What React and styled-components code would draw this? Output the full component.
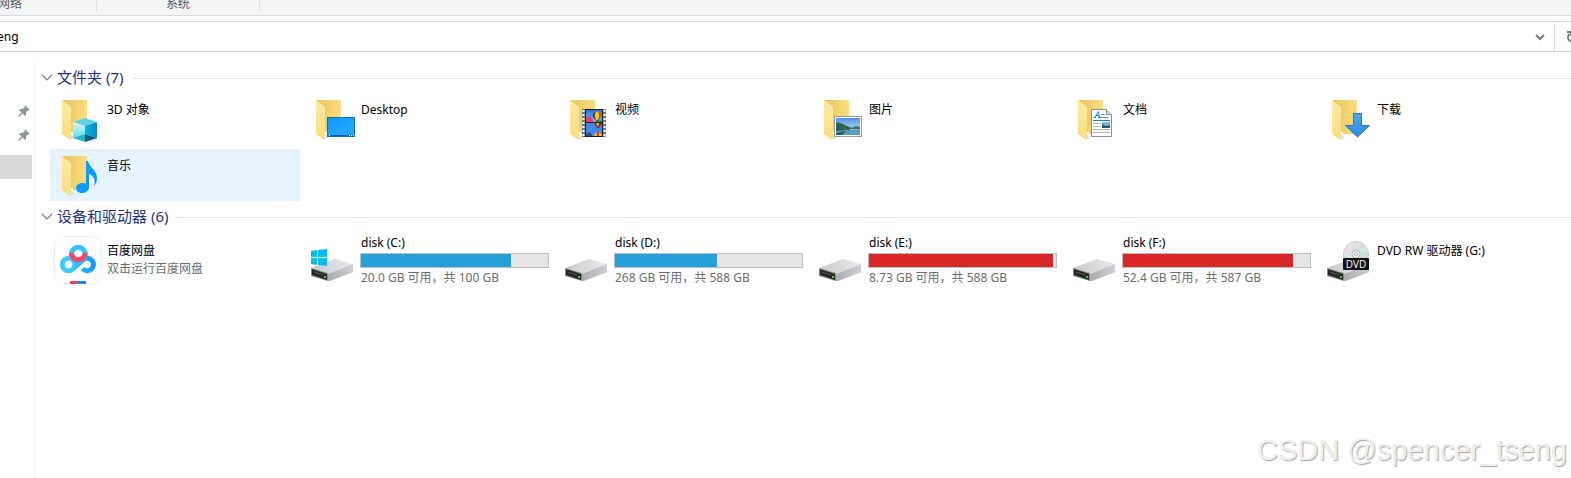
import React, { useState } from "react";
import styled, { createGlobalStyle } from "styled-components";

const folders = [
  { name: "3D 对象", kind: "cube" },
  { name: "Desktop", kind: "desktop" },
  { name: "视频", kind: "video" },
  { name: "图片", kind: "picture" },
  { name: "文档", kind: "document" },
  { name: "下载", kind: "download" },
  { name: "音乐", kind: "music", hovered: true },
];

const drives = [
  { name: "百度网盘", kind: "netdisk", note: "双击运行百度网盘" },
  { name: "disk (C:)", kind: "system", free: "20.0", total: 100 },
  { name: "disk (D:)", kind: "drive", free: "268", total: 588 },
  { name: "disk (E:)", kind: "drive", free: "8.73", total: 588 },
  { name: "disk (F:)", kind: "drive", free: "52.4", total: 587 },
  { name: "DVD RW 驱动器 (G:)", kind: "dvd" },
];

// Icons start
const Cube = () => (
  <>
    <path d="M33 47 L46 44 L43 42z" fill="#e3e3e3" />
    <path d="M31 23 L43 27 L31 31 L19 27z" fill="#5fd2e2" />
    <path d="M19 27 L31 31 V39 L19 43z" fill="url(#cubeLeft)" />
    <path d="M43 27 L31 31 V39 L43 43z" fill="url(#cubeRight)" />
    <path d="M19 43 L31 39 V47z" fill="#27b3c3" />
    <path d="M43 43 L31 39 V47z" fill="#00617f" />
  </>
);

const Desktop = () => (
  <>
    <rect x="19.5" y="22.5" width="27" height="19" fill="url(#screen)" stroke="#0873b8" />
    <path d="M20 40.5 H46" stroke="#0b62a5" />
    <path d="M21 40.5 H22 M41 40.5 H42 M43 40.5 H44 M45 40.5 H46" stroke="#fff" />
  </>
);

const Balloon = ({ x, y, s = 1 }) => (
  <g transform={`translate(${x} ${y}) scale(${s})`}>
    <path d="M0 -5 C5 -5 6 0 2 4 H-2 C-6 0 -5 -5 0 -5z" fill="#f4c51b" />
    <path d="M-1 -5 C-3 -2 -3 1 -1 4 H-2 C-6 0 -5 -4 -1 -5z" fill="#2c3b33" />
    <path d="M1 -5 C3 -2 3 1 1 4 H2 C6 0 5 -4 1 -5z" fill="#c33b2c" />
    <rect x="-1" y="5" width="2" height="1" fill="#412" />
  </g>
);

const Video = () => (
  <>
    <rect x="20" y="14" width="24" height="28" fill="#767676" />
    <path
      d="M21.5 15 V42 M42.5 15 V42"
      stroke="#fff"
      strokeWidth="2"
      strokeDasharray="2 2"
    />
    <rect x="23" y="14" width="18" height="28" fill="#1b1b1f" />
    <rect x="24" y="15" width="16" height="12" fill="url(#sky)" />
    <rect x="24" y="28" width="16" height="13" fill="#4288e6" />
    <path d="M24 23 L28 21 L31 25 V27 H24z" fill="#e43e63" />
    <path d="M33 27 L37 24 L40 26 V27z" fill="#1ca15a" />
    <Balloon x={35} y={21} s={0.9} />
    <path d="M32 28 H40 L37 33 H35z" fill="#7d2a29" />
    <path d="M34 28 H37 L36 32z" fill="#f4c51b" />
    <path d="M24 41 C24 37 29 36 30 41z" fill="#354574" />
    <path d="M32 41 C32 36 40 36 40 41z" fill="#f0b927" />
    <path d="M35 37 H37 V41 H35z" fill="#c33b2c" />
  </>
);

const Picture = () => (
  <>
    <rect x="18.5" y="21.5" width="27" height="20" fill="#fff" stroke="#9b9b9b" />
    <rect x="20" y="23" width="24" height="17" fill="url(#photo)" />
    <path d="M20 28 C25 26 30 32 37 33 L33 35 L20 37z" fill="#2e6253" />
    <path d="M35 33 L40 31 L44 32 V34 H34z" fill="#44745f" />
    <path d="M20 36 L33 35 L44 34 V40 H20z" fill="#5b9bbd" />
    <path d="M20 38 L30 36 L26 40 H20z" fill="#235a5f" />
  </>
);

const DocumentPage = () => (
  <>
    <path d="M21.5 14.5 H36.5 L41.5 19.5 V41.5 H21.5z" fill="#fdfdfd" stroke="#8c8c8c" />
    <path d="M36.5 14.5 V19.5 H41.5" fill="#dedede" stroke="#8c8c8c" />
    <path
      d="M23.5 22.5 H26 M25 22 L28.5 16.5 L29.5 22.5 M26 20.5 H29 M28 22.5 H31"
      fill="none"
      stroke="#1685cf"
    />
    <path d="M31 19.5 H35 M31 22.5 H39" stroke="#54a8de" />
    <path d="M23 25.5 H40" stroke="#1685cf" />
    <path d="M23 28.5 H31 M23 31.5 H31 M23 34.5 H40 M23 37.5 H40" stroke="#b5b5b5" />
    <rect x="32" y="27" width="8" height="6" fill="#7eb6e8" />
    <path d="M32 29 L36 31 L40 30 V33 H32z" fill="#28605f" />
  </>
);

const Download = () => (
  <path
    d="M29.5 18.5 H37.5 V30.5 H45.5 L33.5 42 L21.5 30.5 H29.5z"
    fill="url(#arrow)"
    stroke="#2a76b8"
  />
);

const Music = () => (
  <path
    d="M32 10 H34 C35 16 43 19 43 27 C43 30 42 33 40 35 C42 28 39 24 35 23 V36 C35 40 31 42 28 42 C25 42 22 40 22 37 C22 34 25 32 29 32 C30 32 31 32 32 33z"
    fill="#0a9bf5"
  />
);

const overlays = {
  cube: Cube,
  desktop: Desktop,
  video: Video,
  picture: Picture,
  document: DocumentPage,
  download: Download,
  music: Music,
};

const Folder = ({ kind }) => {
  const Overlay = overlays[kind];
  return (
    <>
      <path d="M15 45 L21 43 L17 39z" fill="#e2e2e2" />
      <rect x="8" y="5" width="25" height="34" fill="url(#folderBack)" />
      <path d="M17 39 H19 V37 H17z" fill="#fff" />
      <path d="M8 5 L17 12 V40 L16 45 L8 39z" fill="url(#folderFront)" />
      <Overlay />
    </>
  );
};

const DriveBody = () => (
  <>
    <path d="M20 45 L46 36 L45 34z" fill="#dcdcdc" />
    <path d="M3 32 L27 23 L45 28 L20 38z" fill="url(#driveTop)" />
    <path d="M20 38 L45 28 V36 L22 45 H20z" fill="url(#driveSide)" />
    <path d="M3 32 L20 37 V45 L3 40z" fill="#8b8b8b" />
    <path d="M4 33 L19 38 V44 L4 39z" fill="#262626" />
    <path d="M6 36 L15 39" stroke="#5a5a5a" />
    <rect x="16" y="40" width="2" height="2" fill="#2fe02f" />
  </>
);

const WindowsLogo = () => (
  <path
    d="M3 15 L9 14 V21 H3z M10 14 L19 13 V21 H10z M3 22 H9 V29 L3 28z M10 22 H19 V30 L10 29z"
    fill="#00bcf2"
  />
);

const Dvd = () => (
  <>
    <DriveBody />
    <circle cx="32" cy="18" r="12.5" fill="url(#disc)" stroke="#c3cbc9" />
    <path d="M32 18 L20 14 L23 10z" fill="#efd9ee" />
    <path d="M32 18 L42 10 L44 15z" fill="#c9efdf" />
    <circle cx="32" cy="18" r="4" fill="#e8eceb" stroke="#b3bbb9" />
    <circle cx="32" cy="18" r="1.5" fill="#fff" stroke="#b3bbb9" />
    <rect x="19" y="22" width="26" height="12" rx="1" fill="#111" />
    <text x="32" y="32" textAnchor="middle" fontFamily="Open Sans, sans-serif" fontSize="10" fill="#fff">
      DVD
    </text>
  </>
);

const Netdisk = () => (
  <>
    <rect x="0.5" y="0.5" width="47" height="47" rx="9" fill="#fff" stroke="#ececec" />
    <g fill="none" strokeWidth="5">
      <circle cx="14.6" cy="28.5" r="6.2" stroke="#3ccbff" />
      <path d="M19 33 L29 24 A6.2 6.2 0 1 1 28.5 32.5" stroke="url(#cloud)" />
      <circle cx="24.3" cy="18" r="6.8" stroke="#2fc0ff" />
      <path d="M17.5 17 A6.8 6.8 0 0 0 31.1 17" stroke="#fb4767" />
    </g>
    <rect x="16" y="45" width="8" height="3" fill="#f5426a" />
    <rect x="24" y="45" width="8" height="3" fill="#1b84f5" />
  </>
);

const ItemIcon = ({ kind }) => (
  <IconBox viewBox="0 0 48 48" aria-hidden="true">
    {overlays[kind] && <Folder kind={kind} />}
    {(kind === "drive" || kind === "system") && <DriveBody />}
    {kind === "system" && <WindowsLogo />}
    {kind === "dvd" && <Dvd />}
    {kind === "netdisk" && <Netdisk />}
  </IconBox>
);

const gradients = [
  { id: "folderBack", from: "#e9c35c", to: "#fbdd80", x2: 1, y2: 0 },
  { id: "folderFront", from: "#ffeaa8", to: "#fbdc7f", x2: 0, y2: 1 },
  { id: "cubeLeft", from: "#e4f8f8", to: "#5edbe8", x2: 0, y2: 1 },
  { id: "cubeRight", from: "#00bcd4", to: "#0c86cf", x2: 1, y2: 0 },
  { id: "screen", from: "#0f97fa", to: "#2aabff", x2: 1, y2: 1 },
  { id: "sky", from: "#2f6fdc", to: "#7db4f5", x2: 0, y2: 1 },
  { id: "photo", from: "#4f92e8", to: "#e8f4fb", x2: 0, y2: 1 },
  { id: "arrow", from: "#4aa8f0", to: "#2b8ce0", x2: 0, y2: 1 },
  { id: "driveTop", from: "#c9cacc", to: "#e9eaec", x2: 1, y2: 0 },
  { id: "driveSide", from: "#a9abae", to: "#cfd0d4", x2: 1, y2: 0 },
  { id: "disc", from: "#e6eae9", to: "#cdd6d3", x2: 1, y2: 1 },
  { id: "cloud", from: "#38c8ff", to: "#0e9cff", x2: 1, y2: 0 },
];

const Gradients = () => (
  <HiddenDefs aria-hidden="true">
    <defs>
      {gradients.map(({ id, from, to, x2, y2 }) => (
        <linearGradient key={id} id={id} x1="0" y1="0" x2={x2} y2={y2}>
          <stop offset="0" stopColor={from} />
          <stop offset="1" stopColor={to} />
        </linearGradient>
      ))}
    </defs>
  </HiddenDefs>
);

const Pin = () => (
  <svg width="12" height="12" viewBox="0 0 12 12" aria-hidden="true">
    <path
      d="M7 0 L12 5 L10 5.5 L8 7.5 V10 L7 11 L4.5 8.5 L1 12 L0 11 L3.5 7.5 L1 5 L2 4 H4.5 L6.5 2z"
      fill="#8c979f"
    />
  </svg>
);
// Icons end

function Item({ item }) {
  const { name, kind, note, free, total, hovered } = item;
  const used = total ? (total - Number(free)) / total : 0;
  return (
    <Tile type="button" $hovered={hovered}>
      <ItemIcon kind={kind} />
      <Details $compact={Boolean(total)}>
        <Name>{name}</Name>
        {total && (
          <Usage value={used} max="1" $low={used > 0.9} aria-label={name} />
        )}
        {total && <Note>{`${free} GB 可用，共 ${total} GB`}</Note>}
        {note && <Note>{note}</Note>}
      </Details>
    </Tile>
  );
}

function Group({ title, items, roomy }) {
  const [open, setOpen] = useState(true);
  return (
    <section>
      <GroupHeader type="button" aria-expanded={open} onClick={() => setOpen(!open)}>
        <svg width="12" height="8" viewBox="0 0 12 8" aria-hidden="true">
          <path d="M1 1 L6 6 L11 1" fill="none" stroke="#777" strokeWidth="1.2" />
        </svg>
        <GroupTitle>
          {title} ({items.length})
        </GroupTitle>
      </GroupHeader>
      {open && (
        <Grid $roomy={roomy}>
          {items.map((item) => (
            <li key={item.name}>
              <Item item={item} />
            </li>
          ))}
        </Grid>
      )}
    </section>
  );
}

function App() {
  const [path, setPath] = useState("eng");
  return (
    <Page>
      <GlobalStyle />
      <Gradients />
      <Ribbon>
        <RibbonGroup $cut>网络</RibbonGroup>
        <RibbonGroup>系统</RibbonGroup>
      </Ribbon>
      <AddressBar>
        <PathInput
          aria-label="地址"
          value={path}
          onChange={(e) => setPath(e.target.value)}
        />
        <BarButton type="button" aria-label="展开" $width={28}>
          <svg width="10" height="8" viewBox="0 0 10 8" aria-hidden="true">
            <path d="M1 2 L5 6 L9 2" fill="none" stroke="#767676" strokeWidth="2" />
          </svg>
        </BarButton>
        <Refresh type="button" aria-label="刷新" $width={17}>
          <svg width="12" height="12" viewBox="0 0 12 12" aria-hidden="true">
            <path d="M9.5 3 A4.5 4.5 0 1 1 3.5 3" fill="none" stroke="#767676" strokeWidth="1.8" />
            <path d="M1 1 H5 V5" fill="none" stroke="#767676" strokeWidth="1.8" />
          </svg>
        </Refresh>
      </AddressBar>
      <Body>
        <Sidebar>
          <PinRow>
            <Pin />
          </PinRow>
          <PinRow>
            <Pin />
          </PinRow>
          <Selected />
        </Sidebar>
        <Main>
          <Group title="文件夹" items={folders} />
          <Group title="设备和驱动器" items={drives} roomy />
        </Main>
      </Body>
      <Watermark>CSDN @spencer_tseng</Watermark>
    </Page>
  );
}

const GlobalStyle = createGlobalStyle`
  * {
    box-sizing: border-box;
  }
  body {
    margin: 0;
    background: #fff;
    overflow: hidden;
  }
  body, button, input {
    font-family: "Noto Sans", "Noto Sans CJK SC", sans-serif;
    font-size: 12px;
    line-height: 17px;
    color: #000;
  }
  button {
    border: 0;
    padding: 0;
    background: none;
    text-align: left;
  }
`;

const Page = styled.div`
  position: relative;
  display: flex;
  flex-direction: column;
  min-height: 100vh;
`;

const HiddenDefs = styled.svg`
  position: absolute;
  width: 0;
  height: 0;
`;

const Ribbon = styled.header`
  display: flex;
  height: 16px;
  padding-bottom: 3px;
  background: #f4f5f7;
  border-bottom: 1px solid #d9dadc;
  overflow: hidden;
`;

const RibbonGroup = styled.div`
  display: flex;
  align-items: flex-end;
  justify-content: center;
  width: ${({ $cut }) => ($cut ? "173px" : "163px")};
  margin-left: ${({ $cut }) => ($cut ? "-76px" : "0")};
  border-right: 1px solid #dfe0e2;
  color: #555;
`;

const AddressBar = styled.div`
  display: flex;
  height: 31px;
  margin-top: 5px;
  border-top: 1px solid #d9d9d9;
  border-bottom: 1px solid #d9d9d9;
`;

const PathInput = styled.input`
  flex: 1;
  min-width: 0;
  border: 0;
  padding: 0;
  text-indent: -3px;
  outline: none;
`;

const BarButton = styled.button`
  display: flex;
  align-items: center;
  justify-content: center;
  width: ${({ $width }) => $width}px;
`;

const Refresh = styled(BarButton)`
  justify-content: flex-start;
  padding-left: 11px;
  border-left: 1px solid #d9d9d9;
  overflow: hidden;

  svg {
    flex-shrink: 0;
  }
`;

const Body = styled.div`
  display: flex;
  flex: 1;
  margin-top: 7px;
`;

const Sidebar = styled.nav`
  width: 35px;
  padding: 40px 2px 0 0;
  border-right: 1px solid #f5f5f5;
`;

const PinRow = styled.div`
  display: flex;
  align-items: center;
  justify-content: flex-end;
  height: 24px;
  padding-right: 2px;
`;

const Selected = styled.div`
  height: 24px;
  margin-top: 8px;
  background: #d9d9d9;
`;

const Main = styled.main`
  flex: 1;
  padding-top: 3px;
`;

const GroupHeader = styled.button`
  display: flex;
  align-items: center;
  gap: 4px;
  width: 100%;
  height: 31px;
  padding-left: 6px;

  &::after {
    content: "";
    flex: 1;
    height: 1px;
    margin: 2px 0 0 4px;
    background: #e2e2e2;
  }
`;

const GroupTitle = styled.span`
  padding-bottom: 2px;
  font-size: 15px;
  line-height: 20px;
  color: #1e3287;
`;

const Grid = styled.ul`
  display: grid;
  grid-template-columns: repeat(auto-fill, 250px);
  gap: 4px;
  margin: 0;
  padding: ${({ $roomy }) => ($roomy ? "2px" : "0")} 0 0 15px;
  list-style: none;
`;

const Tile = styled.button`
  display: flex;
  gap: 4px;
  width: 100%;
  height: 52px;
  padding: 0 5px 0 4px;
  background: ${({ $hovered }) => ($hovered ? "#e5f3ff" : "none")};

  &:hover {
    background: #e5f3ff;
  }
`;

const IconBox = styled.svg`
  flex-shrink: 0;
  align-self: center;
  width: 48px;
  height: 48px;
`;

const Details = styled.span`
  display: flex;
  flex: 1;
  flex-direction: column;
  gap: ${({ $compact }) => ($compact ? "0" : "1px")};
  padding-top: ${({ $compact }) => ($compact ? "0" : "8px")};
`;

const Name = styled.span`
  padding-left: 1px;
  white-space: nowrap;
`;

const Note = styled(Name)`
  color: #6d6d6d;
`;

const Usage = styled.progress`
  appearance: none;
  width: 100%;
  height: 15px;
  margin: 2px 0 1px;
  border: 1px solid #bcbcbc;
  background: #e6e6e6;

  &::-webkit-progress-bar {
    background: #e6e6e6;
  }
  &::-webkit-progress-value {
    background: ${({ $low }) => ($low ? "#da2626" : "#26a0da")};
  }
`;

const Watermark = styled.div`
  position: absolute;
  right: 4px;
  bottom: 11px;
  font-family: "Liberation Sans", sans-serif;
  font-size: 29px;
  line-height: 34px;
  color: #efefef;
  text-shadow: 1px 1px 1px #a6a6a6;
`;

export default App;
